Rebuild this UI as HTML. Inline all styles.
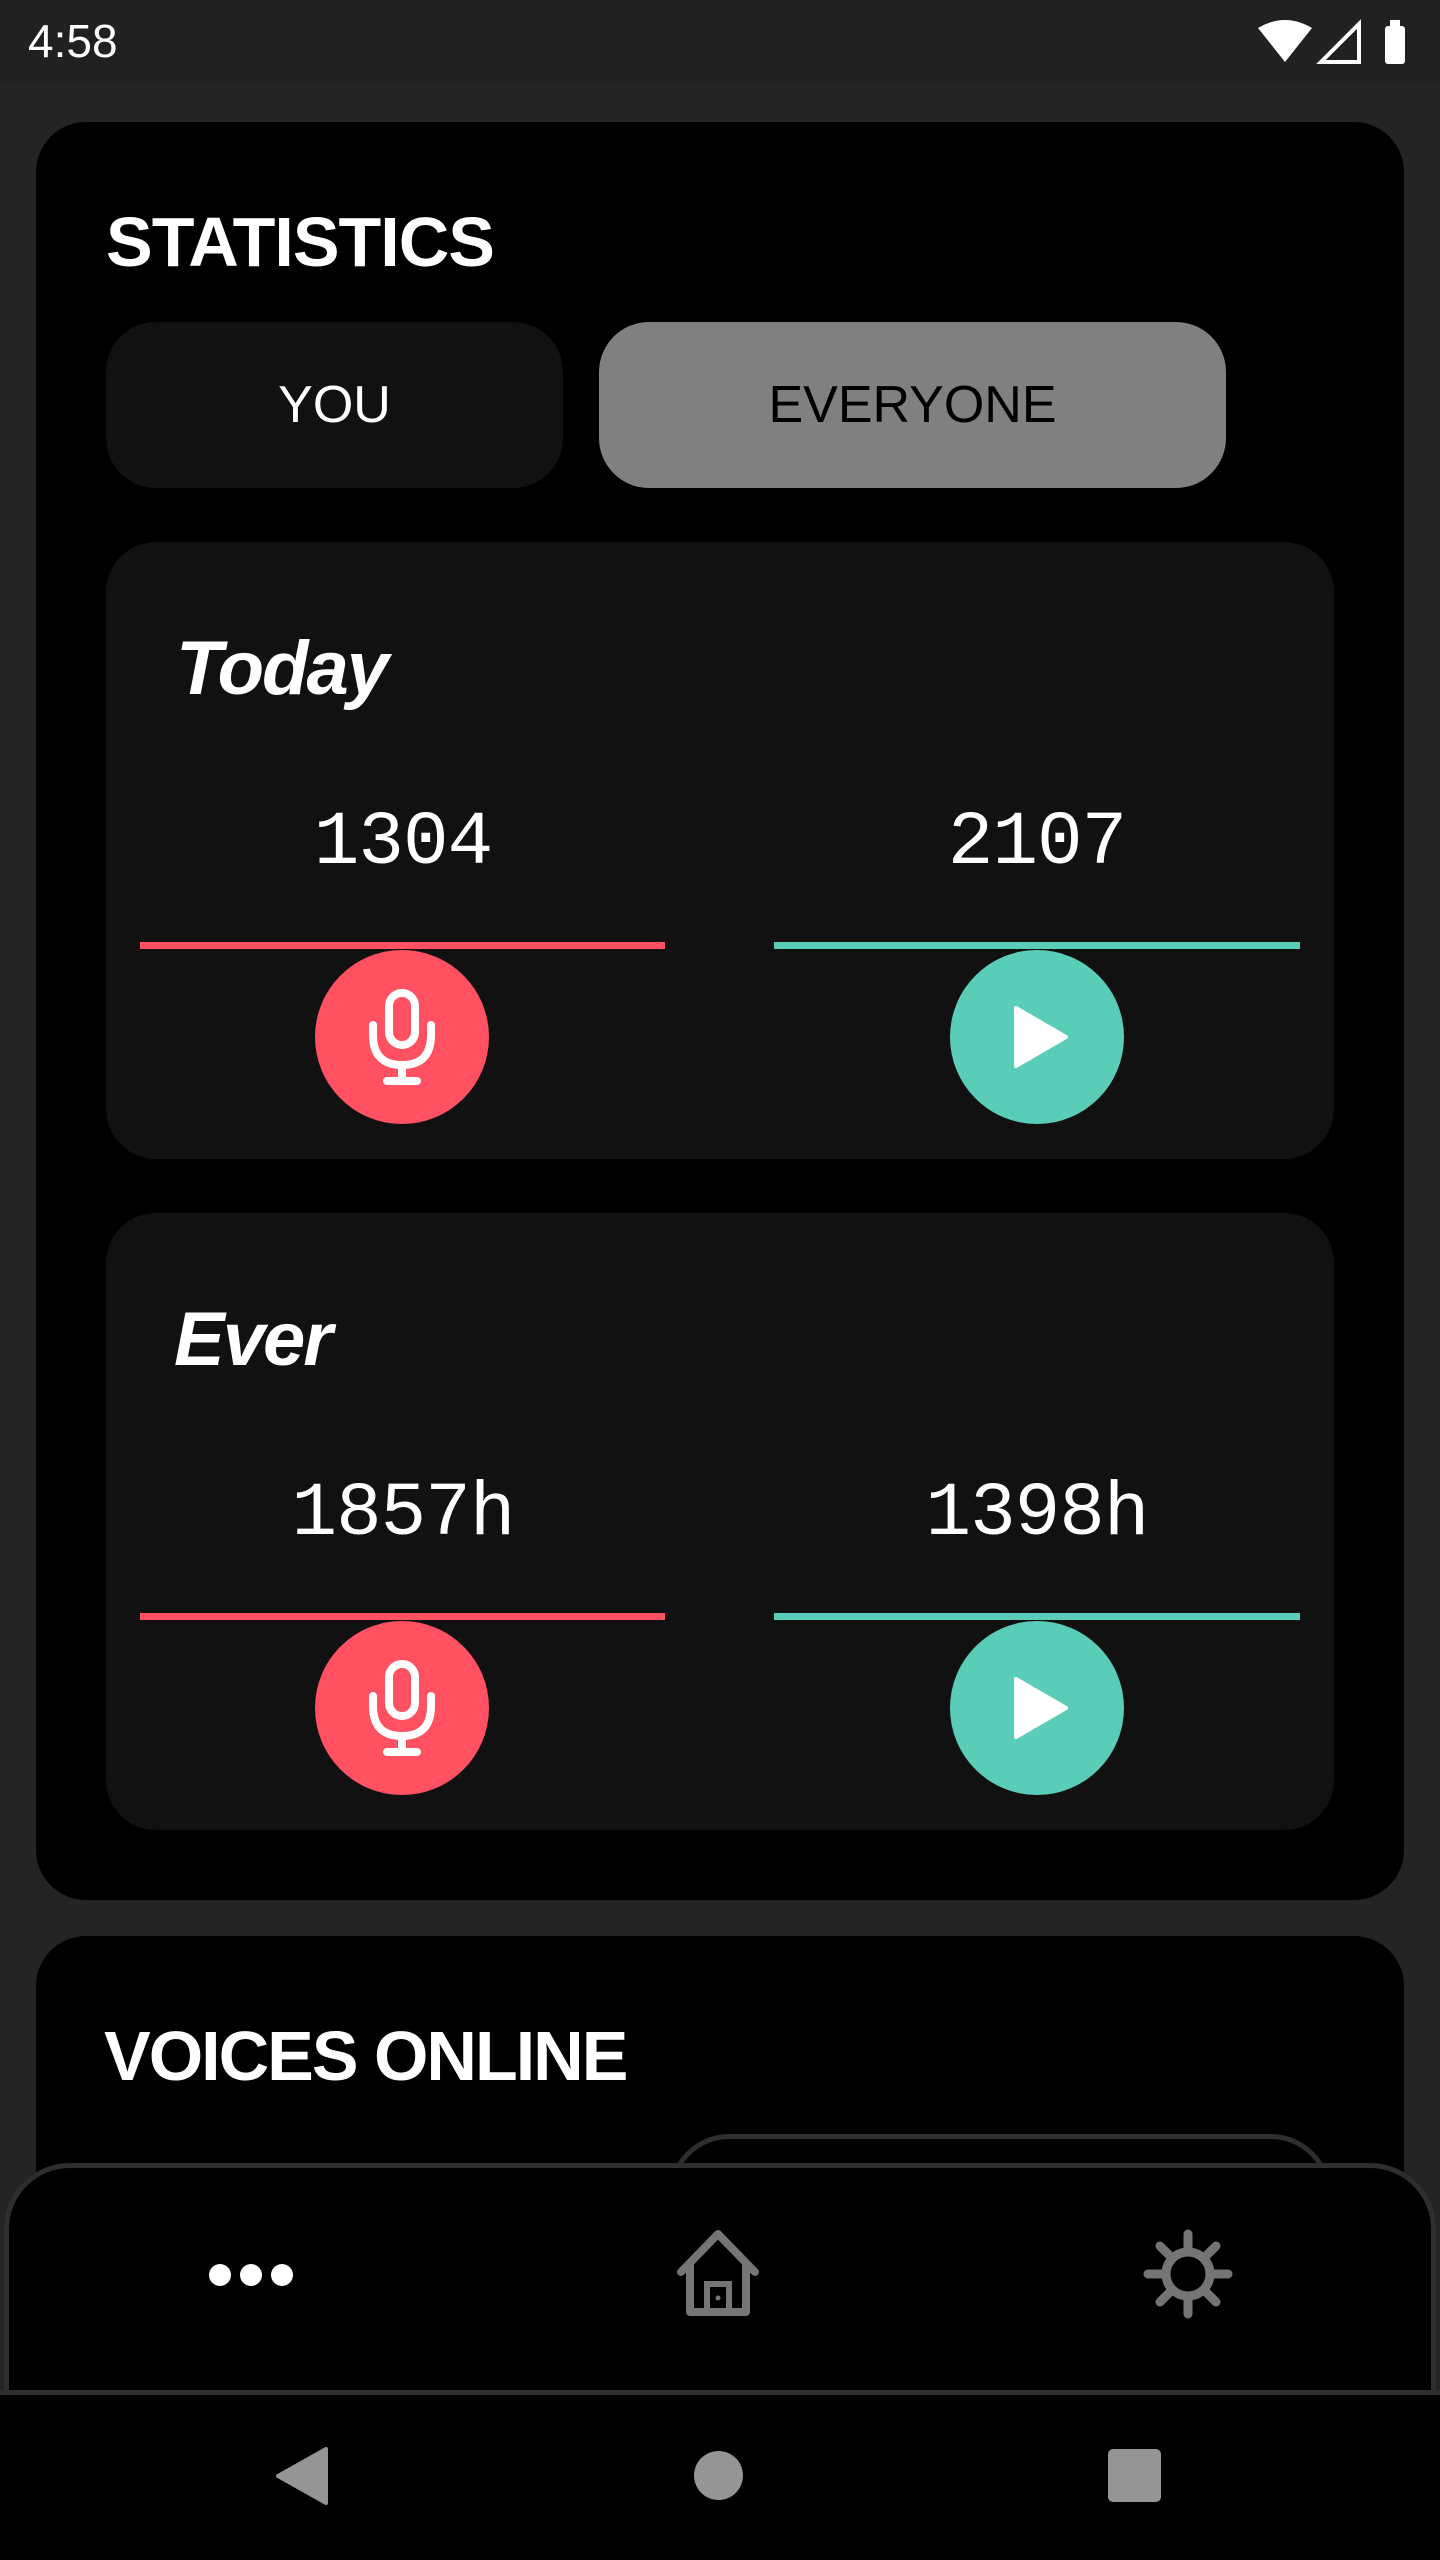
<!DOCTYPE html>
<html style="width:1440px;height:2560px;overflow:hidden"><head><meta charset="utf-8"><style>
*{margin:0;padding:0;box-sizing:border-box}
body{width:1440px;height:2560px;background:#242424;position:relative;overflow:hidden;font-family:"Liberation Sans",sans-serif;color:#fff}
.abs{position:absolute}
.status{left:0;top:0;width:1440px;height:82px;background:#212121}
.card{background:#000;border-radius:50px}
.inner{background:#111;border-radius:50px}
.h1{font-weight:bold;font-size:70px;letter-spacing:-1px}
.btn{border-radius:50px;display:flex;align-items:center;justify-content:center;font-size:52px}
.num{font-family:"Liberation Mono",monospace;font-size:76px;width:526px;text-align:center;letter-spacing:-1px}
.circ{width:174px;height:174px;border-radius:50%;display:flex;align-items:center;justify-content:center}
.it{font-size:76px;font-weight:bold;font-style:italic;letter-spacing:-2px}
</style></head><body>
<div class="abs status"></div>
<div class="abs" style="left:28px;top:14px;font-size:46px;">4:58</div>
<svg class="abs" style="left:1255px;top:18px" width="160" height="48" viewBox="0 0 160 48">
<path d="M3 10 Q30 -6 57 10 L30 44 Z" fill="#fff"/>
<path d="M66 44 L104 6 L104 44 Z" fill="none" stroke="#fff" stroke-width="4"/>
<rect x="130" y="8" width="20" height="38" rx="3" fill="#fff"/><rect x="135" y="2" width="10" height="8" fill="#fff"/>
</svg>

<div class="abs card" style="left:36px;top:122px;width:1368px;height:1778px"></div>
<div class="abs h1" style="left:106px;top:202px">STATISTICS</div>
<div class="abs btn" style="left:106px;top:322px;width:457px;height:166px;background:#111;color:#fff">YOU</div>
<div class="abs btn" style="left:599px;top:322px;width:627px;height:166px;background:#808080;color:#000">EVERYONE</div>

<!-- Today -->
<div class="abs inner" style="left:106px;top:542px;width:1228px;height:617px"></div>
<div class="abs it" style="left:176px;top:625px">Today</div>
<div class="abs num" style="left:140px;top:800px">1304</div>
<div class="abs num" style="left:774px;top:800px">2107</div>
<div class="abs" style="left:140px;top:942px;width:525px;height:7px;background:#ff5161"></div>
<div class="abs" style="left:774px;top:942px;width:526px;height:7px;background:#5acdb9"></div>
<div class="abs circ" style="left:315px;top:950px;background:#ff5161">
<svg width="70" height="100" viewBox="0 0 70 100"><rect x="22" y="6" width="26" height="52" rx="13" fill="none" stroke="#fff" stroke-width="8"/><path d="M6 38 V48 Q6 78 35 78 Q64 78 64 48 V38" fill="none" stroke="#fff" stroke-width="8" stroke-linecap="round"/><path d="M35 78 V92 M20 94 H50" stroke="#fff" stroke-width="8" stroke-linecap="round"/></svg></div>
<div class="abs circ" style="left:950px;top:950px;background:#5acdb9">
<svg width="70" height="70" viewBox="0 0 70 70"><path d="M14 6 L64 35 L14 64 Z" fill="#fff" stroke="#fff" stroke-width="4" stroke-linejoin="round"/></svg></div>

<!-- Ever -->
<div class="abs inner" style="left:106px;top:1213px;width:1228px;height:617px"></div>
<div class="abs it" style="left:174px;top:1296px">Ever</div>
<div class="abs num" style="left:140px;top:1471px">1857h</div>
<div class="abs num" style="left:774px;top:1471px">1398h</div>
<div class="abs" style="left:140px;top:1613px;width:525px;height:7px;background:#ff5161"></div>
<div class="abs" style="left:774px;top:1613px;width:526px;height:7px;background:#5acdb9"></div>
<div class="abs circ" style="left:315px;top:1621px;background:#ff5161">
<svg width="70" height="100" viewBox="0 0 70 100"><rect x="22" y="6" width="26" height="52" rx="13" fill="none" stroke="#fff" stroke-width="8"/><path d="M6 38 V48 Q6 78 35 78 Q64 78 64 48 V38" fill="none" stroke="#fff" stroke-width="8" stroke-linecap="round"/><path d="M35 78 V92 M20 94 H50" stroke="#fff" stroke-width="8" stroke-linecap="round"/></svg></div>
<div class="abs circ" style="left:950px;top:1621px;background:#5acdb9">
<svg width="70" height="70" viewBox="0 0 70 70"><path d="M14 6 L64 35 L14 64 Z" fill="#fff" stroke="#fff" stroke-width="4" stroke-linejoin="round"/></svg></div>

<!-- Voices -->
<div class="abs card" style="left:36px;top:1936px;width:1368px;height:560px"></div>
<div class="abs h1" style="left:104px;top:2016px;letter-spacing:-2px">VOICES ONLINE</div>
<div class="abs" style="left:669px;top:2134px;width:662px;height:200px;border:5px solid #2e2e2e;border-radius:60px"></div>

<!-- bottom nav -->
<div class="abs" style="left:4px;top:2163px;width:1432px;height:240px;background:#000;border:5px solid #2e2e2e;border-radius:66px 66px 0 0"></div>
<div class="abs" style="left:0;top:2390px;width:1440px;height:170px;background:#000;border-top:5px solid #2e2e2e"></div>
<svg class="abs" style="left:200px;top:2250px" width="100" height="50"><circle cx="20" cy="25" r="11" fill="#fff"/><circle cx="51" cy="25" r="11" fill="#fff"/><circle cx="82" cy="25" r="11" fill="#fff"/></svg>
<svg class="abs" style="left:673px;top:2228px" width="90" height="92" viewBox="0 0 90 92"><path d="M8 44 L45 6 L82 44" fill="none" stroke="#757575" stroke-width="8" stroke-linecap="round" stroke-linejoin="round"/><path d="M17 36 V84 H73 V36" fill="none" stroke="#757575" stroke-width="8" stroke-linejoin="round"/><rect x="34" y="56" width="22" height="28" fill="none" stroke="#757575" stroke-width="6"/><circle cx="45" cy="70" r="2.5" fill="#757575"/></svg>
<svg class="abs" style="left:1142px;top:2228px" width="92" height="92" viewBox="0 0 92 92"><g stroke="#757575" stroke-width="9" stroke-linecap="round"><path d="M46 6V20M46 72V86M6 46H20M72 46H86M18 18L28 28M64 64L74 74M18 74L28 64M64 28L74 18"/></g><circle cx="46" cy="46" r="22" fill="none" stroke="#757575" stroke-width="9"/></svg>
<svg class="abs" style="left:270px;top:2445px" width="60" height="62"><path d="M56 4 V58 L8 31 Z" fill="#959595" stroke="#959595" stroke-width="4" stroke-linejoin="round"/></svg>
<div class="abs" style="left:694px;top:2451px;width:49px;height:49px;border-radius:50%;background:#959595"></div>
<div class="abs" style="left:1108px;top:2449px;width:53px;height:53px;border-radius:5px;background:#959595"></div>
</body></html>
